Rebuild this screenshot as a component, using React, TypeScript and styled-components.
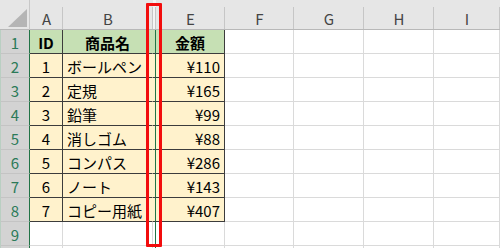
import React from "react";
import styled, { createGlobalStyle, css } from "styled-components";

const GlobalStyle = createGlobalStyle`
    html, body {
        margin: 0;
        padding: 0;
        background: #ffffff;
        overflow: hidden;
    }
`;

const FONT = `"Noto Sans CJK JP", "Noto Sans", sans-serif`;
const GREEN = "#217346";
const GRID = "#dadada";
const INK = "#3c3c3c";

const Sheet = styled.div`
    position: relative;
    width: 500px;
    height: 248px;
    overflow: hidden;
    display: grid;
    grid-template-columns: 30px 33px 90px 3px 69px 69px 70px 70px 1fr;
    grid-template-rows: 30px repeat(10, 24px);
    font-family: ${FONT};
    color: #000;
`;

const Corner = styled.div`
    background: #e6e6e6;
    border-bottom: 1px solid #b8b8b8;
    border-right: 1px solid #c8c8c8;
    box-sizing: border-box;
    display: flex;
    align-items: flex-end;
    justify-content: flex-end;
    padding: 0 2px 2px 0;
`;

const ColHead = styled.div<{ $hidden?: boolean }>`
    position: relative;
    box-sizing: border-box;
    background: ${(p) => (p.$hidden ? "#f4f4f4" : "#e6e6e6")};
    border-bottom: 1px solid #b8b8b8;
    display: flex;
    align-items: center;
    justify-content: center;
    padding-top: 7px;
    font-size: 15px;
    color: #444;

    &::after {
        content: "";
        position: absolute;
        right: 0;
        top: 7px;
        bottom: 0;
        width: 1px;
        background: #c6c6c6;
    }
`;

const RowHead = styled.div`
    box-sizing: border-box;
    background: #d3d3d3;
    border-left: 1px solid #b9cfc2;
    border-right: 1px solid ${GREEN};
    border-bottom: 1px solid #c4c4c4;
    display: flex;
    align-items: center;
    justify-content: center;
    padding-top: 2px;
    font-size: 15px;
    color: #2b7a58;
`;

const Cell = styled.div<{
    $bg?: string;
    $align?: "left" | "center" | "right";
    $bold?: boolean;
    $boxed?: boolean;
    $gap?: boolean;
    $marker?: boolean;
}>`
    box-sizing: border-box;
    background: ${(p) => p.$bg || "#ffffff"};
    border-right: 1px solid ${GRID};
    border-bottom: 1px solid ${GRID};
    display: flex;
    align-items: center;
    padding: 2px 4px 0 4px;
    font-size: 15px;
    white-space: nowrap;
    overflow: hidden;
    font-weight: ${(p) => (p.$bold ? 700 : 400)};
    justify-content: ${(p) =>
        p.$align === "center" ? "center" : p.$align === "right" ? "flex-end" : "flex-start"};

    ${(p) =>
        p.$boxed &&
        css`
            border-right-color: ${INK};
            border-bottom-color: ${INK};
        `}
    ${(p) =>
        p.$gap &&
        css`
            border-right-color: transparent;
        `}
    ${(p) =>
        p.$marker &&
        css`
            padding: 0;
            border-right-color: ${GREEN};
        `}
`;

const Highlight = styled.div`
    position: absolute;
    left: 146px;
    top: 3px;
    width: 16px;
    height: 244px;
    box-sizing: border-box;
    border: 3px solid #f20d0d;
    border-radius: 1px;
    pointer-events: none;
`;

type Item = { id: number; name: string; price: string };

const items: Item[] = [
    { id: 1, name: "ボールペン", price: "¥110" },
    { id: 2, name: "定規", price: "¥165" },
    { id: 3, name: "鉛筆", price: "¥99" },
    { id: 4, name: "消しゴム", price: "¥88" },
    { id: 5, name: "コンパス", price: "¥286" },
    { id: 6, name: "ノート", price: "¥143" },
    { id: 7, name: "コピー用紙", price: "¥407" },
];

const HEAD_BG = "#c6e0b4";
const BODY_BG = "#fff2cc";

const EmptyCols = () => (
    <>
        <Cell />
        <Cell />
        <Cell />
        <Cell />
    </>
);

const App = () => {
    return (
        <>
            <GlobalStyle />
            <Sheet>
                <Corner>
                    <svg width="19" height="18" viewBox="0 0 19 18">
                        <polygon points="19,0 19,18 0,18" fill="#b5b5b5" />
                    </svg>
                </Corner>
                <ColHead>A</ColHead>
                <ColHead>B</ColHead>
                <ColHead $hidden />
                <ColHead>E</ColHead>
                <ColHead>F</ColHead>
                <ColHead>G</ColHead>
                <ColHead>H</ColHead>
                <ColHead>I</ColHead>

                <RowHead>1</RowHead>
                <Cell $bg={HEAD_BG} $boxed $bold $align="center">ID</Cell>
                <Cell $bg={HEAD_BG} $boxed $gap $bold $align="center">商品名</Cell>
                <Cell $bg={HEAD_BG} $boxed $marker />
                <Cell $bg={HEAD_BG} $boxed $bold $align="center">金額</Cell>
                <EmptyCols />

                {items.map((it, i) => (
                    <React.Fragment key={`row${it.id}`}>
                        <RowHead>{i + 2}</RowHead>
                        <Cell $bg={BODY_BG} $boxed $align="center">{it.id}</Cell>
                        <Cell $bg={BODY_BG} $boxed $gap>{it.name}</Cell>
                        <Cell $bg={BODY_BG} $boxed $marker />
                        <Cell $bg={BODY_BG} $boxed $align="right">{it.price}</Cell>
                        <EmptyCols />
                    </React.Fragment>
                ))}

                {/* row 9, then the top sliver of row 10 */}
                {["9", ""].map((n, i) => (
                    <React.Fragment key={`tail${i}`}>
                        <RowHead>{n}</RowHead>
                        <Cell />
                        <Cell />
                        <Cell $marker />
                        <Cell />
                        <EmptyCols />
                    </React.Fragment>
                ))}
                <Highlight />
            </Sheet>
        </>
    );
};

export default App;
